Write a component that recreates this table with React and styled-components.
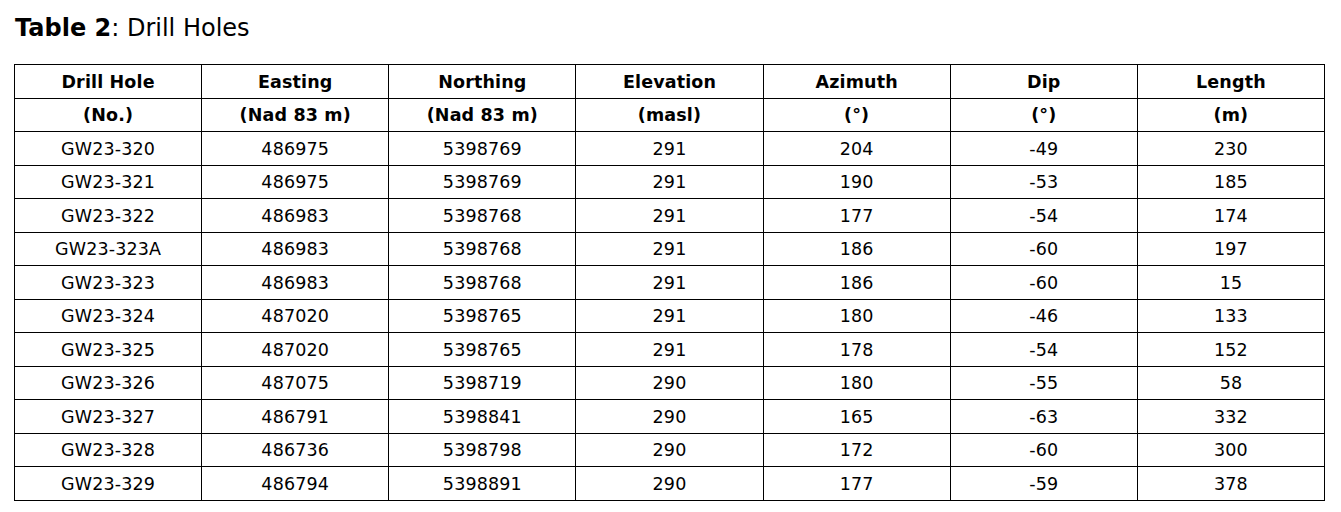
import styled, { createGlobalStyle } from "styled-components";

const GlobalStyle = createGlobalStyle`
  body {
    margin: 0;
    background: #ffffff;
    font-family: "DejaVu Sans", Verdana, sans-serif;
    color: #000000;
  }
`;

const Page = styled.div`
  padding: 15px 16px 0 14px;
`;

const Caption = styled.h2`
  margin: 0 0 22px 1px;
  font-size: 24px;
  line-height: 27px;
  font-weight: normal;

  strong {
    font-weight: bold;
  }
`;

const Table = styled.table`
  width: 1311px;
  border-collapse: collapse;
  table-layout: fixed;
  font-size: 17.5px;
`;

const Row = styled.tr`
  height: 33.5px;
`;

const Cell = styled.td`
  border: 1px solid #000000;
  padding: 1px 0 0;
  text-align: center;
  vertical-align: middle;
  font-weight: ${(props) => (props.head ? "bold" : "normal")};
  letter-spacing: 0.15px;
`;

const headers = [
  ["Drill Hole", "(No.)"],
  ["Easting", "(Nad 83 m)"],
  ["Northing", "(Nad 83 m)"],
  ["Elevation", "(masl)"],
  ["Azimuth", "(°)"],
  ["Dip", "(°)"],
  ["Length", "(m)"],
];

const holes = [
  ["GW23-320", "486975", "5398769", "291", "204", "-49", "230"],
  ["GW23-321", "486975", "5398769", "291", "190", "-53", "185"],
  ["GW23-322", "486983", "5398768", "291", "177", "-54", "174"],
  ["GW23-323A", "486983", "5398768", "291", "186", "-60", "197"],
  ["GW23-323", "486983", "5398768", "291", "186", "-60", "15"],
  ["GW23-324", "487020", "5398765", "291", "180", "-46", "133"],
  ["GW23-325", "487020", "5398765", "291", "178", "-54", "152"],
  ["GW23-326", "487075", "5398719", "290", "180", "-55", "58"],
  ["GW23-327", "486791", "5398841", "290", "165", "-63", "332"],
  ["GW23-328", "486736", "5398798", "290", "172", "-60", "300"],
  ["GW23-329", "486794", "5398891", "290", "177", "-59", "378"],
];

const App = () => {
  return (
    <Page>
      <GlobalStyle />
      <Caption>
        <strong>Table 2</strong>: Drill Holes
      </Caption>
      <Table>
        <thead>
          {[0, 1].map((line) => (
            <Row key={line}>
              {headers.map((h) => (
                <Cell as="th" head key={h[0]}>
                  {h[line]}
                </Cell>
              ))}
            </Row>
          ))}
        </thead>
        <tbody>
          {holes.map((hole) => (
            <Row key={hole[0]}>
              {hole.map((value, i) => (
                <Cell key={i}>{value}</Cell>
              ))}
            </Row>
          ))}
        </tbody>
      </Table>
    </Page>
  );
};

export default App;
